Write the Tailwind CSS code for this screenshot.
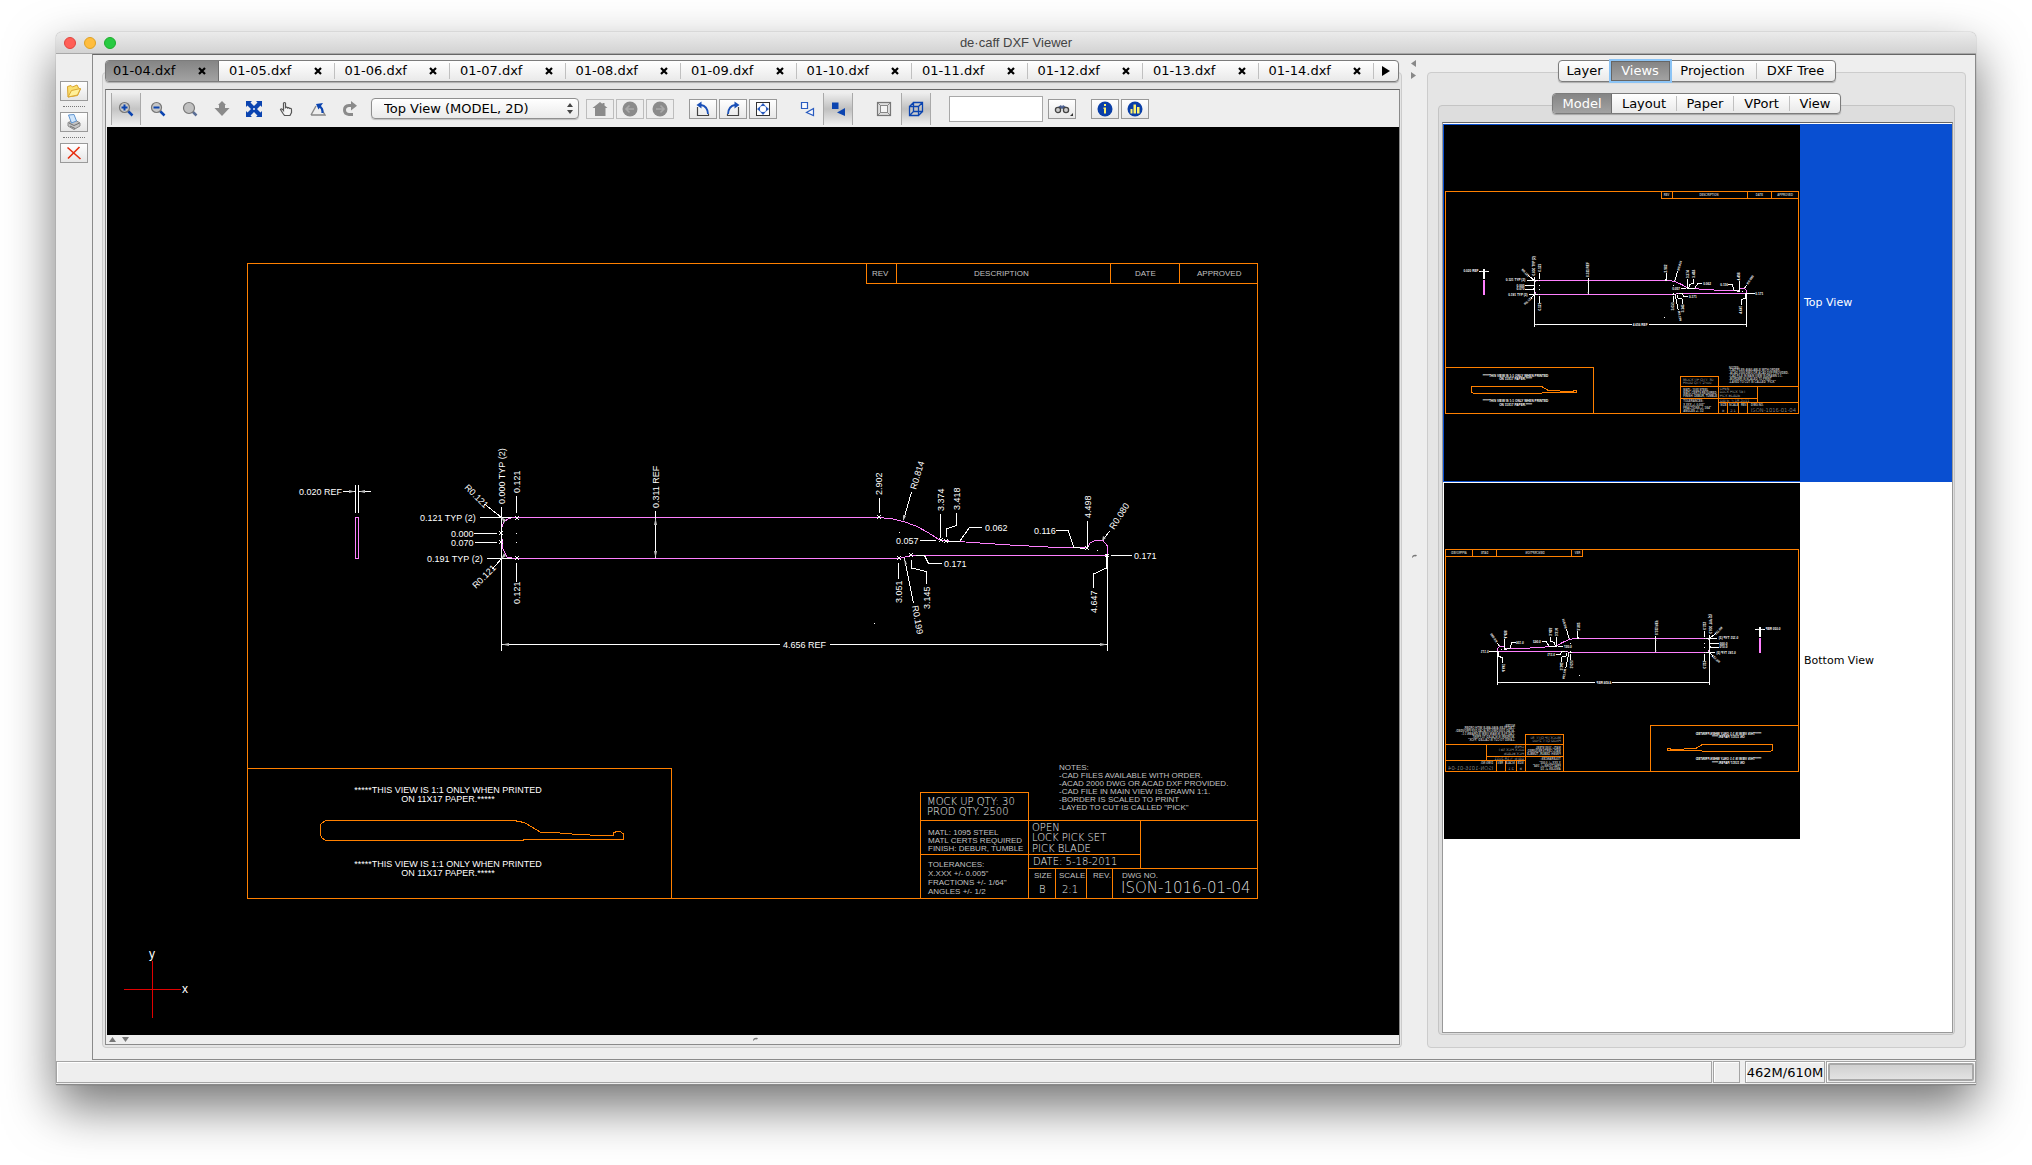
<!DOCTYPE html>
<html lang="en">
<head>
<meta charset="utf-8">
<title>de·caff DXF Viewer</title>
<script src="https://cdn.jsdelivr.net/npm/@tailwindcss/browser@4"></script>
</head>
<body class="bg-white font-['DejaVu_Sans',sans-serif] text-[13px] leading-4 text-black">
<div class="flex min-h-screen px-14 pt-8 pb-20">
<div class="flex min-w-0 flex-1 flex-col rounded-t-md bg-[#eeeeee] shadow-[0_22px_50px_rgba(0,0,0,0.55),0_0_1px_rgba(0,0,0,0.6)]">

  <!-- Title bar -->
  <header class="relative flex h-[22px] items-center justify-center rounded-t-md border-b border-[#a8a8a8] bg-linear-to-b from-[#ebebeb] to-[#d3d3d3] pt-px">
    <div class="absolute left-2 flex gap-2">
      <button aria-label="Close" class="size-3 rounded-full border border-[#e0443e] bg-[#ff5f57]"></button>
      <button aria-label="Minimize" class="size-3 rounded-full border border-[#dea123] bg-[#ffbd3e]"></button>
      <button aria-label="Zoom" class="size-3 rounded-full border border-[#1dad2b] bg-[#28ca42]"></button>
    </div>
    <h1 class="font-['Liberation_Sans',sans-serif] text-[13px] leading-4 text-[#444444]">de·caff DXF Viewer</h1>
  </header>

  <div class="flex min-h-0 flex-1 pb-px">
    <!-- File tools -->
    <nav aria-label="File" class="flex w-9 flex-col items-center pt-[27px]">
      <button aria-label="Open" class="flex h-5 w-7 items-center justify-center border border-[#9a9a9a] bg-linear-to-b from-white to-[#e6e6e6]">
        <svg class="h-4 w-4" viewBox="0 0 16 16"><path d="M2 14 1.500 3.500 5 2.500 6.500 4 11 2 12.500 5 14.500 6 11.500 12.500Z" fill="#fbdf6e" stroke="#d9a32c"/><path d="M2 14 5.500 7.500 14.500 5.500 11.500 12Z" fill="#fff09a" stroke="#dba835"/></svg>
      </button>
      <div class="my-[5px] w-[22px] border-t border-dotted border-[#777777]"></div>
      <button aria-label="Print" class="flex h-5 w-7 items-center justify-center border border-[#9a9a9a] bg-linear-to-b from-white to-[#e6e6e6]">
        <svg class="h-4 w-4" viewBox="0 0 16 16"><path d="M2 8.500 9 6 14 9 14 12 8 15.500 2 12Z" fill="#c4c4c4" stroke="#8a8a8a"/><path d="M3 9 8 11.500 13.500 9M4 12 9 14.500" stroke="#707070" fill="none"/><path d="M2.500 1 8 .5 10.500 7 5.500 9Z" fill="#cfe5fb" stroke="#5f94cf"/></svg>
      </button>
      <div class="my-[5px] w-[22px] border-t border-dotted border-[#777777]"></div>
      <button aria-label="Close file" class="flex h-5 w-7 items-center justify-center border border-[#9a9a9a] bg-linear-to-b from-white to-[#e6e6e6]">
        <svg class="h-4 w-4" viewBox="0 0 16 16"><path d="M1.500 2.500 14.500 14M13.500 2 2 13.500" stroke="#e62e10" stroke-width="1.600" fill="none"/></svg>
      </button>
    </nav>

    <main class="flex min-w-0 flex-1 border border-[#8a8a8a] border-t-[#666666] pt-[5px] pr-[9px] pb-[11px] pl-[9px]">

      <!-- Document pane -->
      <section class="flex min-w-0 flex-1 flex-col">
        <div class="relative z-10 mr-[3px] ml-[3px] flex h-[22px] overflow-hidden rounded-[4px] border border-[#7c7c7c] bg-linear-to-b from-white via-[#f4f4f4] to-[#e9e9e9] shadow-[0_1px_1px_rgba(0,0,0,0.25)]">
          <div class="flex w-[113px] items-center justify-between border-r border-[#6f6f6f] bg-linear-to-b from-[#858585] to-[#a2a2a2] pr-3 pl-[7px]"><button>01-04.dxf</button><button aria-label="Close 01-04.dxf"><svg class="size-2" viewBox="0 0 8 8"><path d="M1 1 7 7M7 1 1 7" stroke="#000" stroke-width="2.200"/></svg></button></div>
          <div class="my-0.5 flex flex-1 items-center justify-between border-r border-[#c0c0c0] pr-3 pl-[10px]"><button>01-05.dxf</button><button aria-label="Close 01-05.dxf"><svg class="size-2" viewBox="0 0 8 8"><path d="M1 1 7 7M7 1 1 7" stroke="#000" stroke-width="2.200"/></svg></button></div>
          <div class="my-0.5 flex flex-1 items-center justify-between border-r border-[#c0c0c0] pr-3 pl-[10px]"><button>01-06.dxf</button><button aria-label="Close 01-06.dxf"><svg class="size-2" viewBox="0 0 8 8"><path d="M1 1 7 7M7 1 1 7" stroke="#000" stroke-width="2.200"/></svg></button></div>
          <div class="my-0.5 flex flex-1 items-center justify-between border-r border-[#c0c0c0] pr-3 pl-[10px]"><button>01-07.dxf</button><button aria-label="Close 01-07.dxf"><svg class="size-2" viewBox="0 0 8 8"><path d="M1 1 7 7M7 1 1 7" stroke="#000" stroke-width="2.200"/></svg></button></div>
          <div class="my-0.5 flex flex-1 items-center justify-between border-r border-[#c0c0c0] pr-3 pl-[10px]"><button>01-08.dxf</button><button aria-label="Close 01-08.dxf"><svg class="size-2" viewBox="0 0 8 8"><path d="M1 1 7 7M7 1 1 7" stroke="#000" stroke-width="2.200"/></svg></button></div>
          <div class="my-0.5 flex flex-1 items-center justify-between border-r border-[#c0c0c0] pr-3 pl-[10px]"><button>01-09.dxf</button><button aria-label="Close 01-09.dxf"><svg class="size-2" viewBox="0 0 8 8"><path d="M1 1 7 7M7 1 1 7" stroke="#000" stroke-width="2.200"/></svg></button></div>
          <div class="my-0.5 flex flex-1 items-center justify-between border-r border-[#c0c0c0] pr-3 pl-[10px]"><button>01-10.dxf</button><button aria-label="Close 01-10.dxf"><svg class="size-2" viewBox="0 0 8 8"><path d="M1 1 7 7M7 1 1 7" stroke="#000" stroke-width="2.200"/></svg></button></div>
          <div class="my-0.5 flex flex-1 items-center justify-between border-r border-[#c0c0c0] pr-3 pl-[10px]"><button>01-11.dxf</button><button aria-label="Close 01-11.dxf"><svg class="size-2" viewBox="0 0 8 8"><path d="M1 1 7 7M7 1 1 7" stroke="#000" stroke-width="2.200"/></svg></button></div>
          <div class="my-0.5 flex flex-1 items-center justify-between border-r border-[#c0c0c0] pr-3 pl-[10px]"><button>01-12.dxf</button><button aria-label="Close 01-12.dxf"><svg class="size-2" viewBox="0 0 8 8"><path d="M1 1 7 7M7 1 1 7" stroke="#000" stroke-width="2.200"/></svg></button></div>
          <div class="my-0.5 flex flex-1 items-center justify-between border-r border-[#c0c0c0] pr-3 pl-[10px]"><button>01-13.dxf</button><button aria-label="Close 01-13.dxf"><svg class="size-2" viewBox="0 0 8 8"><path d="M1 1 7 7M7 1 1 7" stroke="#000" stroke-width="2.200"/></svg></button></div>
          <div class="my-0.5 flex flex-1 items-center justify-between border-r border-[#c0c0c0] pr-3 pl-[10px]"><button>01-14.dxf</button><button aria-label="Close 01-14.dxf"><svg class="size-2" viewBox="0 0 8 8"><path d="M1 1 7 7M7 1 1 7" stroke="#000" stroke-width="2.200"/></svg></button></div>
          <button aria-label="More tabs" class="flex w-6 items-center justify-center"><svg class="h-[10px] w-2" viewBox="0 0 8 10"><path d="M0 0 8 5 0 10Z"/></svg></button>
        </div>

        <div class="-mt-[10px] flex min-h-0 flex-1 flex-col rounded-[4px] border border-[#cccccc] bg-[#e5e5e5] pt-4 pr-px pb-[2px] pl-[2px]">
          <div class="flex min-h-0 flex-1 flex-col border border-[#8a8a8a] border-t-[#666666] bg-[#eeeeee] pl-px">

            <!-- View toolbar -->
            <div class="flex h-[37px] items-center pl-1">
              <div class="flex gap-0.5">
                <button aria-label="Zoom in" class="flex h-8 w-[30px] items-center justify-center border-x border-[#a9a9a9] bg-linear-to-b from-[#eeeeee] via-[#c4c4c4] to-[#eeeeee]"><svg class="size-4" viewBox="0 0 16 16"><path d="M10 10 14.500 14.500" stroke="#0b44b0" stroke-width="2.500"/><circle cx="6.500" cy="6.500" r="5" fill="#c6c6c6" stroke="#777" stroke-width="1.200"/><path d="M3.500 6.500h6M6.500 3.500v6" stroke="#0b44b0" stroke-width="2"/></svg></button>
                <button aria-label="Zoom out" class="flex h-8 w-[30px] items-center justify-center"><svg class="size-4" viewBox="0 0 16 16"><path d="M10 10 14.500 14.500" stroke="#0b44b0" stroke-width="2.500"/><circle cx="6.500" cy="6.500" r="5" fill="#c6c6c6" stroke="#777" stroke-width="1.200"/><path d="M3.500 6.500h6" stroke="#0b44b0" stroke-width="2"/></svg></button>
                <button aria-label="Zoom window" class="flex h-8 w-[30px] items-center justify-center"><svg class="size-4" viewBox="0 0 16 16"><path d="M10.500 10.500 14.500 14.500" stroke="#5b6f96" stroke-width="2.500"/><circle cx="7" cy="7" r="5.500" fill="#c0c0c0" stroke="#777" stroke-width="1.200"/></svg></button>
                <button aria-label="Pan" class="flex h-8 w-[30px] items-center justify-center"><svg class="size-4" viewBox="0 0 16 16"><path d="M8 0 12 4H11V7H15.500L8 15 .5 7H5V4H4Z" fill="#8a8a8a"/></svg></button>
                <button aria-label="Fit" class="flex h-8 w-[30px] items-center justify-center"><svg class="size-4" viewBox="0 0 16 16"><path d="M0 0H6L4.500 1.500 8 5 11.500 1.500 10 0H16V6L14.500 4.500 11 8 14.500 11.500 16 10V16H10L11.500 14.500 8 11 4.500 14.500 6 16H0V10L1.500 11.500 5 8 1.500 4.500 0 6Z" fill="#0a43b0"/><path d="M7 8H9M8 7V9" stroke="#dfe8fa" stroke-width="1"/></svg></button>
                <button aria-label="Hand" class="flex h-8 w-[30px] items-center justify-center"><svg class="size-4" viewBox="0 0 16 16"><path d="M5.500 9.500V2.200Q6.500 .8 7.500 2.200V6.500Q8.500 5.500 9.500 7 10.500 6 11.500 7.500 13.500 6.800 13.500 9V11.500L12 14.500H6.500L5 12.500 2.500 8.500Q3.500 7 5.500 9.500Z" fill="#f4f4f4" stroke="#555" stroke-width="1.200"/></svg></button>
                <button aria-label="Rotate view" class="flex h-8 w-[30px] items-center justify-center"><svg class="size-4" viewBox="0 0 16 16"><path d="M1 14 6 5M1 14H15L12 9" fill="none" stroke="#888" stroke-width="1.400"/><path d="M12.500 12Q13 7 9 5" fill="none" stroke="#0b44b0" stroke-width="2.200"/><path d="M6 3 13 2 8.500 8.500Z" fill="#0b44b0"/></svg></button>
                <button aria-label="Refresh" class="flex h-8 w-[30px] items-center justify-center"><svg class="size-4" viewBox="0 0 16 16"><path d="M10 4.500H7Q2.500 5 2.500 9T7 13.500H11" fill="none" stroke="#8a8a8a" stroke-width="3"/><path d="M9 0 15 4.800 9 9.500Z" fill="#8a8a8a"/></svg></button>
              </div>
              <div class="relative ml-1.5">
                <select aria-label="View" class="block h-[21px] w-[208px] appearance-none rounded-[4px] border border-[#8f8f8f] bg-linear-to-b from-white to-[#eaeaea] pl-3 text-[13px] leading-4 shadow-[0_1px_1px_rgba(0,0,0,0.2)]"><option>Top View (MODEL, 2D)</option></select>
                <svg class="pointer-events-none absolute top-[5px] right-[6px] h-[11px] w-[6px]" viewBox="0 0 6 11"><path d="M0 4 3 0 6 4ZM0 7H6L3 11Z" fill="#444"/></svg>
              </div>
              <div class="ml-[7px] flex gap-0.5">
                <button aria-label="Home" disabled class="flex h-5 w-7 items-center justify-center border border-[#bdbdbd]"><svg class="size-4" viewBox="0 0 16 16"><path d="M8 1 10.500 3V2H12.500V4.500L15.500 7H13.500V15H3V7H.5Z" fill="#8b8b8b"/></svg></button>
                <button aria-label="Back" disabled class="flex h-5 w-7 items-center justify-center border border-[#bdbdbd]"><svg class="size-4" viewBox="0 0 16 16"><circle cx="8" cy="8" r="7.500" fill="#8b8b8b"/><path d="M12 8H4.500M7.500 4.500 4 8 7.500 11.500" fill="none" stroke="#a9a9a9" stroke-width="1.600"/></svg></button>
                <button aria-label="Forward" disabled class="flex h-5 w-7 items-center justify-center border border-[#bdbdbd]"><svg class="size-4" viewBox="0 0 16 16"><circle cx="8" cy="8" r="7.500" fill="#8b8b8b"/><path d="M4 8H11.500M8.500 4.500 12 8 8.500 11.500" fill="none" stroke="#a9a9a9" stroke-width="1.600"/></svg></button>
              </div>
              <div class="ml-[15px] flex gap-0.5">
                <button aria-label="Rotate left" class="flex h-5 w-7 items-center justify-center border border-[#999999] bg-linear-to-b from-white to-[#e8e8e8]"><svg class="size-4" viewBox="0 0 16 16"><path d="M2.500 6V14.500H13.500V13" fill="none" stroke="#444" stroke-width="1.200"/><path d="M13 13Q12.500 5 6 4" fill="none" stroke="#1a50b8" stroke-width="1.800"/><path d="M1.500 4 6.500 .5V7.500Z" fill="#1a50b8"/></svg></button>
                <button aria-label="Rotate right" class="flex h-5 w-7 items-center justify-center border border-[#999999] bg-linear-to-b from-white to-[#e8e8e8]"><svg class="size-4" viewBox="0 0 16 16"><path d="M13.500 6V14.500H2.500V13" fill="none" stroke="#444" stroke-width="1.200"/><path d="M3 13Q3.500 5 10 4" fill="none" stroke="#1a50b8" stroke-width="1.800"/><path d="M14.500 4 9.500 .5V7.500Z" fill="#1a50b8"/></svg></button>
                <button aria-label="Fit to page" class="flex h-5 w-7 items-center justify-center border border-[#999999] bg-linear-to-b from-white to-[#e8e8e8]"><svg class="size-4" viewBox="0 0 16 16"><rect x="1.500" y="1.500" width="13" height="13" fill="#fff" stroke="#333"/><path d="M8 2 11 5.500H5ZM8 14 5 10.500H11ZM2 8 5.500 5V11ZM14 8 10.500 11V5Z" fill="#2a5cc0"/><circle cx="8" cy="8" r="3" fill="#fff"/></svg></button>
              </div>
              <div class="ml-[14px] flex gap-px">
                <button aria-label="Outline shapes" class="flex h-8 w-[31px] items-center justify-center"><svg class="size-4" viewBox="0 0 16 16"><path d="M2.500 1.500h6v6h-6zM14.500 7.500V14.500L7.500 11.500Z" fill="#f6f8fd" stroke="#2a5cc0" stroke-width="1.200"/></svg></button>
                <button aria-label="Filled shapes" class="flex h-8 w-[30px] items-center justify-center border-x border-[#a9a9a9] bg-linear-to-b from-[#eeeeee] via-[#c0c0c0] to-[#eeeeee]"><svg class="size-4" viewBox="0 0 16 16"><path d="M2 1.500h6.500v6.500H2zM15 7V15L7 11.500Z" fill="#0b44b0"/></svg></button>
              </div>
              <div class="ml-[15px] flex gap-0.5">
                <button aria-label="Flat" class="flex h-8 w-[31px] items-center justify-center"><svg class="size-4" viewBox="0 0 16 16"><rect x="1.500" y="1.500" width="13" height="13" fill="#dedede" stroke="#777" stroke-width="1.200"/><rect x="4.500" y="4.500" width="7" height="7" fill="#f4f4f4" stroke="#888"/><path d="M2 2 4.500 4.500M14 2 11.500 4.500M2 14 4.500 11.500M14 14 11.500 11.500" stroke="#888"/></svg></button>
                <button aria-label="Wireframe" class="flex h-8 w-[30px] items-center justify-center border-x border-[#a9a9a9] bg-linear-to-b from-[#eeeeee] via-[#c0c0c0] to-[#eeeeee]"><svg class="size-4" viewBox="0 0 16 16"><path d="M1.500 5.500h9v9h-9zM5.500 1.500h9v9h-9zM1.500 5.500 5.500 1.500M10.500 5.500 14.500 1.500M10.500 14.500 14.500 10.500M1.500 14.500 5.500 10.500" fill="none" stroke="#0b44b0" stroke-width="1.300"/></svg></button>
              </div>
              <input aria-label="Search" type="text" class="ml-[18px] h-[26px] w-[94px] border border-[#a8a8a8] bg-white px-1">
              <button aria-label="Find" class="relative ml-[5px] flex h-5 w-7 items-center justify-center border border-[#999999] bg-linear-to-b from-white to-[#e8e8e8]"><svg class="size-4" viewBox="0 0 16 16"><path d="M4 6 7 4 8 5.500 9 4 12 6 8 8Z" fill="#4a5f90"/><circle cx="4" cy="9" r="2.600" fill="#ccc" stroke="#444" stroke-width="1.300"/><circle cx="12" cy="9" r="2.600" fill="#ccc" stroke="#444" stroke-width="1.300"/></svg><svg class="absolute right-0.5 bottom-0.5 size-[3px]" viewBox="0 0 3 3"><path d="M3 0V3H0Z" fill="#333"/></svg></button>
              <div class="ml-[15px] flex gap-0.5">
                <button aria-label="Info" class="flex h-5 w-7 items-center justify-center border border-[#999999] bg-linear-to-b from-white to-[#e8e8e8]"><svg class="size-4" viewBox="0 0 16 16"><circle cx="8" cy="8" r="7.500" fill="#0a3fa8"/><path d="M7 3h2v2H7zM6.500 6.500h2.500v6H7V8h-.5z" fill="#fff36b"/></svg></button>
                <button aria-label="Statistics" class="flex h-5 w-7 items-center justify-center border border-[#999999] bg-linear-to-b from-white to-[#e8e8e8]"><svg class="size-4" viewBox="0 0 16 16"><circle cx="8" cy="8" r="7.500" fill="#0a3fa8"/><path d="M3.500 8h2v4.500h-2zM6.500 3.500h2.500v9H6.500zM10 6h2.500v6.500H10z" fill="#fff36b"/></svg></button>
              </div>
            </div>

            <!-- Drawing -->
            <div class="flex min-h-0 flex-1 bg-black">
              <svg class="h-full min-h-[300px] w-full font-['Liberation_Sans',sans-serif] text-[9px]" viewBox="107 127 1292 908" role="img" aria-label="Drawing 01-04">
                <g id="drawing">
                  <g fill="none" stroke="#ff8000" shape-rendering="crispEdges">
                    <path vector-effect="non-scaling-stroke" d="M247.500 263.500H1257.500V898.500H247.500ZM866.500 263.500V283.500H1257.500M896.500 263.500V283.500M1110.500 263.500V283.500M1179.500 263.500V283.500M247.500 768.500H671.500V898.500"/>
                    <path vector-effect="non-scaling-stroke" d="M920.500 898.500V792.500H1028.500V898.500M920.500 820.500H1257.500M920.500 854.500H1140.500M1140.500 820.500V868.500M1028.500 868.500H1257.500M1055.500 868.500V898.500M1086.500 868.500V898.500M1112.500 868.500V898.500"/>
                    <path vector-effect="non-scaling-stroke" d="M326 820.500H514L524 822.500 532 827 541 832.500 554 832.500 578 834.500 602 835.500H613L614 832.500 617 831.500H620L623.500 834V839.500H524L523 840.500H326L322 838 320.500 835V825L322 823Z"/>
                  </g>
                  <g fill="none" stroke="#ff80ff" shape-rendering="crispEdges">
                    <path vector-effect="non-scaling-stroke" d="M512 517.500H880L893 519 905 522 917 526.500 928 532.500 940.500 540.500 958 541.500 1010 545 1058 547.500H1087.500L1090 543 1095 540.500H1103L1107.500 546V555.500H911L899 558.500H514L507 557 502.500 548 501.500 528 504 522 508 519Z"/>
                    <path vector-effect="non-scaling-stroke" d="M355.500 517.500H358.500V558.500H355.500Z"/>
                  </g>
                  <g fill="none" stroke="#ffffff" shape-rendering="crispEdges">
                    <path vector-effect="non-scaling-stroke" d="M355.500 485V513M358.500 485V513M343 491.500H355M359 491.500H371M480 517.500H512M474 533.500H497M475 542.500H497M487 558.500H512M501.500 507V651M516.500 496V513M516.500 563V582M484.500 504 501.500 517.500M492.500 569 501.500 558.500M655.500 511V558M502 644.500H780M830 644.500H1107M1107.500 556V651"/>
                    <path vector-effect="non-scaling-stroke" d="M879.500 498V513M911.500 492 903.500 520M940.500 514V538M956.500 513V525.500L946.500 529V537M946 541.500H959.500L969.500 527.500H982M920 540.500H936M1056 530.500H1068L1074 547.500 1085 548.500M1087.500 521V547M1109.500 531 1103 540M1111 555.500H1132M1106.500 556V568L1093.500 574V588M916 555.500H924.500L928.500 563.500H942M911.500 560V568L926.500 571.500V584M898.500 563V579M904.500 558 913.500 603"/>
                    <path vector-effect="non-scaling-stroke" d="M515 516 519 520M519 516 515 520M515 556 519 560M519 556 515 560M499 531 503 535M503 531 499 535M499 540 503 544M503 540 499 544M877 515 881 519M881 515 877 519M939 538 943 542M943 538 939 542M944 539 948 543M948 539 944 543M897 556 901 560M901 556 897 560M909 553 913 557M913 553 909 557M1085 546 1089 550M1089 546 1085 550M1105 554 1109 557M1109 554 1105 557M516 533.500H517M516 542.500H517M899 532.500H900M874 623.500H875M1097 550.500H1098"/>
                  </g>
                  <g fill="#bdbdbd">
                    <path d="M355 491.500 349 490V493ZM359 491.500 365 490V493ZM655.500 518 654 525H657ZM655.500 558 654 551H657ZM502 644.500 509 643V646ZM1107 644.500 1100 643V646ZM903 521 903 515 906 516ZM1102 541 1103 536 1106 538ZM904 558 905 565 907 564ZM501 517 506 520 504 523ZM501 559 506 556 504 553Z"/>
                  </g>
                  <g fill="#ffffff">
                    <text x="299" y="495">0.020 REF</text>
                    <text x="420" y="521">0.121 TYP (2)</text>
                    <text x="451" y="537">0.000</text>
                    <text x="451" y="546">0.070</text>
                    <text x="427" y="562">0.191 TYP (2)</text>
                    <text transform="translate(505 504) rotate(-90)">0.000 TYP (2)</text>
                    <text transform="translate(520 493) rotate(-90)">0.121</text>
                    <text transform="translate(520 604) rotate(-90)">0.121</text>
                    <text transform="translate(464 488) rotate(45)">R0.121</text>
                    <text transform="translate(476 589) rotate(-45)">R0.121</text>
                    <text transform="translate(659 508) rotate(-90)">0.311 REF</text>
                    <text x="783" y="648">4.656 REF</text>
                    <text transform="translate(882 495) rotate(-90)">2.902</text>
                    <text transform="translate(916 490) rotate(-73)">R0.814</text>
                    <text transform="translate(944 511) rotate(-90)">3.374</text>
                    <text transform="translate(960 510) rotate(-90)">3.418</text>
                    <text x="985" y="531">0.062</text>
                    <text x="896" y="544">0.057</text>
                    <text x="1034" y="534">0.116</text>
                    <text transform="translate(1091 518) rotate(-90)">4.498</text>
                    <text transform="translate(1114 530) rotate(-57)">R0.080</text>
                    <text x="1134" y="559">0.171</text>
                    <text transform="translate(1097 613) rotate(-90)">4.647</text>
                    <text x="944" y="567">0.171</text>
                    <text transform="translate(930 609) rotate(-90)">3.145</text>
                    <text transform="translate(902 603) rotate(-90)">3.051</text>
                    <text transform="translate(912 606) rotate(80)">R0.199</text>
                  </g>
                  <g fill="#ffffff" text-anchor="middle">
                    <text x="448" y="793">*****THIS VIEW IS 1:1 ONLY WHEN PRINTED</text>
                    <text x="448" y="802">ON 11X17 PAPER.*****</text>
                    <text x="448" y="867">*****THIS VIEW IS 1:1 ONLY WHEN PRINTED</text>
                    <text x="448" y="876">ON 11X17 PAPER.*****</text>
                  </g>
                  <g fill="#c0c0c0" class="text-[8px]">
                    <text x="872" y="276">REV</text>
                    <text x="974" y="276">DESCRIPTION</text>
                    <text x="1135" y="276">DATE</text>
                    <text x="1197" y="276">APPROVED</text>
                    <text x="1059" y="770">NOTES:</text>
                    <text x="1059" y="778">-CAD FILES AVAILABLE WITH ORDER.</text>
                    <text x="1059" y="786">-ACAD 2000 DWG OR ACAD DXF PROVIDED.</text>
                    <text x="1059" y="794">-CAD FILE IN MAIN VIEW IS DRAWN 1:1.</text>
                    <text x="1059" y="802">-BORDER IS SCALED TO PRINT</text>
                    <text x="1059" y="810">-LAYED TO CUT IS CALLED "PICK"</text>
                    <text x="928" y="835">MATL: 1095 STEEL</text>
                    <text x="928" y="843">MATL CERTS REQUIRED</text>
                    <text x="928" y="851">FINISH: DEBUR, TUMBLE</text>
                    <text x="928" y="867">TOLERANCES:</text>
                    <text x="928" y="876">X.XXX +/- 0.005"</text>
                    <text x="928" y="885">FRACTIONS +/- 1/64"</text>
                    <text x="928" y="894">ANGLES +/- 1/2</text>
                    <text x="1034" y="878">SIZE</text>
                    <text x="1059" y="878">SCALE</text>
                    <text x="1093" y="878">REV.</text>
                    <text x="1122" y="878">DWG NO.</text>
                  </g>
                  <g fill="#f0f0f0" class="font-['DejaVu_Sans',sans-serif] text-[10px] font-extralight">
                    <text x="927" y="805">MOCK UP QTY: 30</text>
                    <text x="927" y="815">PROD QTY. 2500</text>
                    <text x="1032" y="831">OPEN</text>
                    <text x="1032" y="841">LOCK PICK SET</text>
                    <text x="1032" y="852">PICK BLADE</text>
                    <text x="1033" y="865">DATE: 5-18-2011</text>
                    <text x="1039" y="893">B</text>
                    <text x="1062" y="893">2:1</text>
                  </g>
                  <text x="1121" y="893" fill="#dcdcdc" class="font-['DejaVu_Sans',sans-serif] text-[15px] font-extralight">ISON-1016-01-04</text>
                </g>
                <path d="M124 989.500H181M152.500 961V1018" stroke="#e00000" fill="none" shape-rendering="crispEdges"/>
                <g fill="#ffffff" class="text-[12px]"><text x="149" y="958">y</text><text x="182" y="993">x</text></g>
              </svg>
            </div>
            <div class="relative flex h-[9px] items-center gap-1.5 pl-0.5">
              <svg class="h-[5px] w-[7px]" viewBox="0 0 7 5"><path d="M0 5 3.500 0 7 5Z" fill="#777"/></svg>
              <svg class="h-[5px] w-[7px]" viewBox="0 0 7 5"><path d="M0 0H7L3.500 5Z" fill="#777"/></svg>
              <svg class="absolute top-0.5 left-1/2 h-1 w-[5px]" viewBox="0 0 5 4"><path d="M0 4Q0 0 5 1L4 2.500Q2 1.500 0 4Z" fill="#777"/></svg>
            </div>
          </div>
        </div>
      </section>

      <!-- Split divider -->
      <div class="relative flex w-[25px] flex-col items-center gap-[5px] pr-0.5">
        <svg class="h-[7px] w-[5px]" viewBox="0 0 5 7"><path d="M5 0V7L0 3.500Z" fill="#888"/></svg>
        <svg class="h-[7px] w-[5px]" viewBox="0 0 5 7"><path d="M0 0V7L5 3.500Z" fill="#888"/></svg>
        <svg class="absolute top-1/2 left-[10px] h-1 w-[5px]" viewBox="0 0 5 4"><path d="M0 4Q0 0 5 1L4 2.500Q2 1.500 0 4Z" fill="#777"/></svg>
      </div>

      <!-- Inspector -->
      <aside class="flex w-[539px] flex-col">
        <div class="relative z-10 flex h-[22px] self-center rounded-[4px] border border-[#7c7c7c] bg-linear-to-b from-white via-[#f4f4f4] to-[#e9e9e9] shadow-[0_1px_1px_rgba(0,0,0,0.25)]">
          <button class="w-[52px]">Layer</button>
          <button class="w-[59px] border border-[#666666] bg-linear-to-b from-[#858585] to-[#a2a2a2] text-white ring-2 ring-[#8cc4f5]">Views</button>
          <button class="my-0.5 w-[87px] border-r border-[#c0c0c0]">Projection</button>
          <button class="w-[78px]">DXF Tree</button>
        </div>
        <div class="-mt-[10px] flex min-h-0 flex-1 flex-col rounded-[4px] border border-[#cccccc] bg-[#e5e5e5] px-[10px] pt-5 pb-3">
          <div class="relative z-10 flex h-[21px] self-center overflow-hidden rounded-[4px] border border-[#7c7c7c] bg-linear-to-b from-white via-[#f4f4f4] to-[#e9e9e9] shadow-[0_1px_1px_rgba(0,0,0,0.25)]">
            <button class="w-[59px] border-r border-[#6f6f6f] bg-linear-to-b from-[#858585] to-[#a2a2a2] text-white">Model</button>
            <button class="my-0.5 w-[65px] border-r border-[#c0c0c0]">Layout</button>
            <button class="my-0.5 w-[57px] border-r border-[#c0c0c0]">Paper</button>
            <button class="my-0.5 w-[56px] border-r border-[#c0c0c0]">VPort</button>
            <button class="w-[50px]">View</button>
          </div>
          <div class="-mt-[9px] flex min-h-0 flex-1 flex-col rounded-[4px] border border-[#c4c4c4] bg-[#dddddd] pt-4 pr-px pb-px pl-[3px]">
            <ul class="flex min-h-0 flex-1 flex-col border border-[#999999] border-t-[#666666] bg-white pt-px text-[11px]">
              <li class="flex h-[358px] items-center bg-[#094fd1] py-px pl-px text-white">
                <svg class="size-[356px] bg-black font-['Liberation_Sans',sans-serif] text-[9px] font-bold" viewBox="0 0 356 356" aria-hidden="true"><use href="#drawing" transform="translate(1.5 66.5) scale(.3495) translate(-247.5 -263.5)"/></svg>
                <span class="pl-1">Top View</span>
              </li>
              <li class="flex h-[358px] items-center py-px pl-px">
                <svg class="size-[356px] bg-black font-['Liberation_Sans',sans-serif] text-[9px] font-bold" viewBox="0 0 356 356" aria-hidden="true"><use href="#drawing" transform="translate(354.5 66.5) scale(-.3495 .3495) translate(-247.5 -263.5)"/></svg>
                <span class="pl-1">Bottom View</span>
              </li>
            </ul>
          </div>
        </div>
      </aside>
    </main>
  </div>

  <!-- Status bar -->
  <footer class="flex h-6 gap-px border-b border-[#8a8a8a] pb-px">
    <div class="flex-1 border border-[#a4a4a4] shadow-[inset_1px_1px_0_#ffffff]"></div>
    <div class="w-[27px] border border-[#a4a4a4] shadow-[inset_1px_1px_0_#ffffff]"></div>
    <div class="ml-1 flex w-20 items-center justify-center border border-[#a4a4a4] pt-0.5 shadow-[inset_1px_1px_0_#ffffff]">462M/610M</div>
    <div class="flex w-[150px] border border-[#a4a4a4] p-px shadow-[inset_1px_1px_0_#ffffff]"><div role="progressbar" aria-label="Memory" class="flex-1 rounded-[2px] border-2 border-[#a8a8a8] bg-linear-to-b from-[#d0d0d0] to-[#e2e2e2]"></div></div>
  </footer>
</div>
</div>
</body>
</html>
